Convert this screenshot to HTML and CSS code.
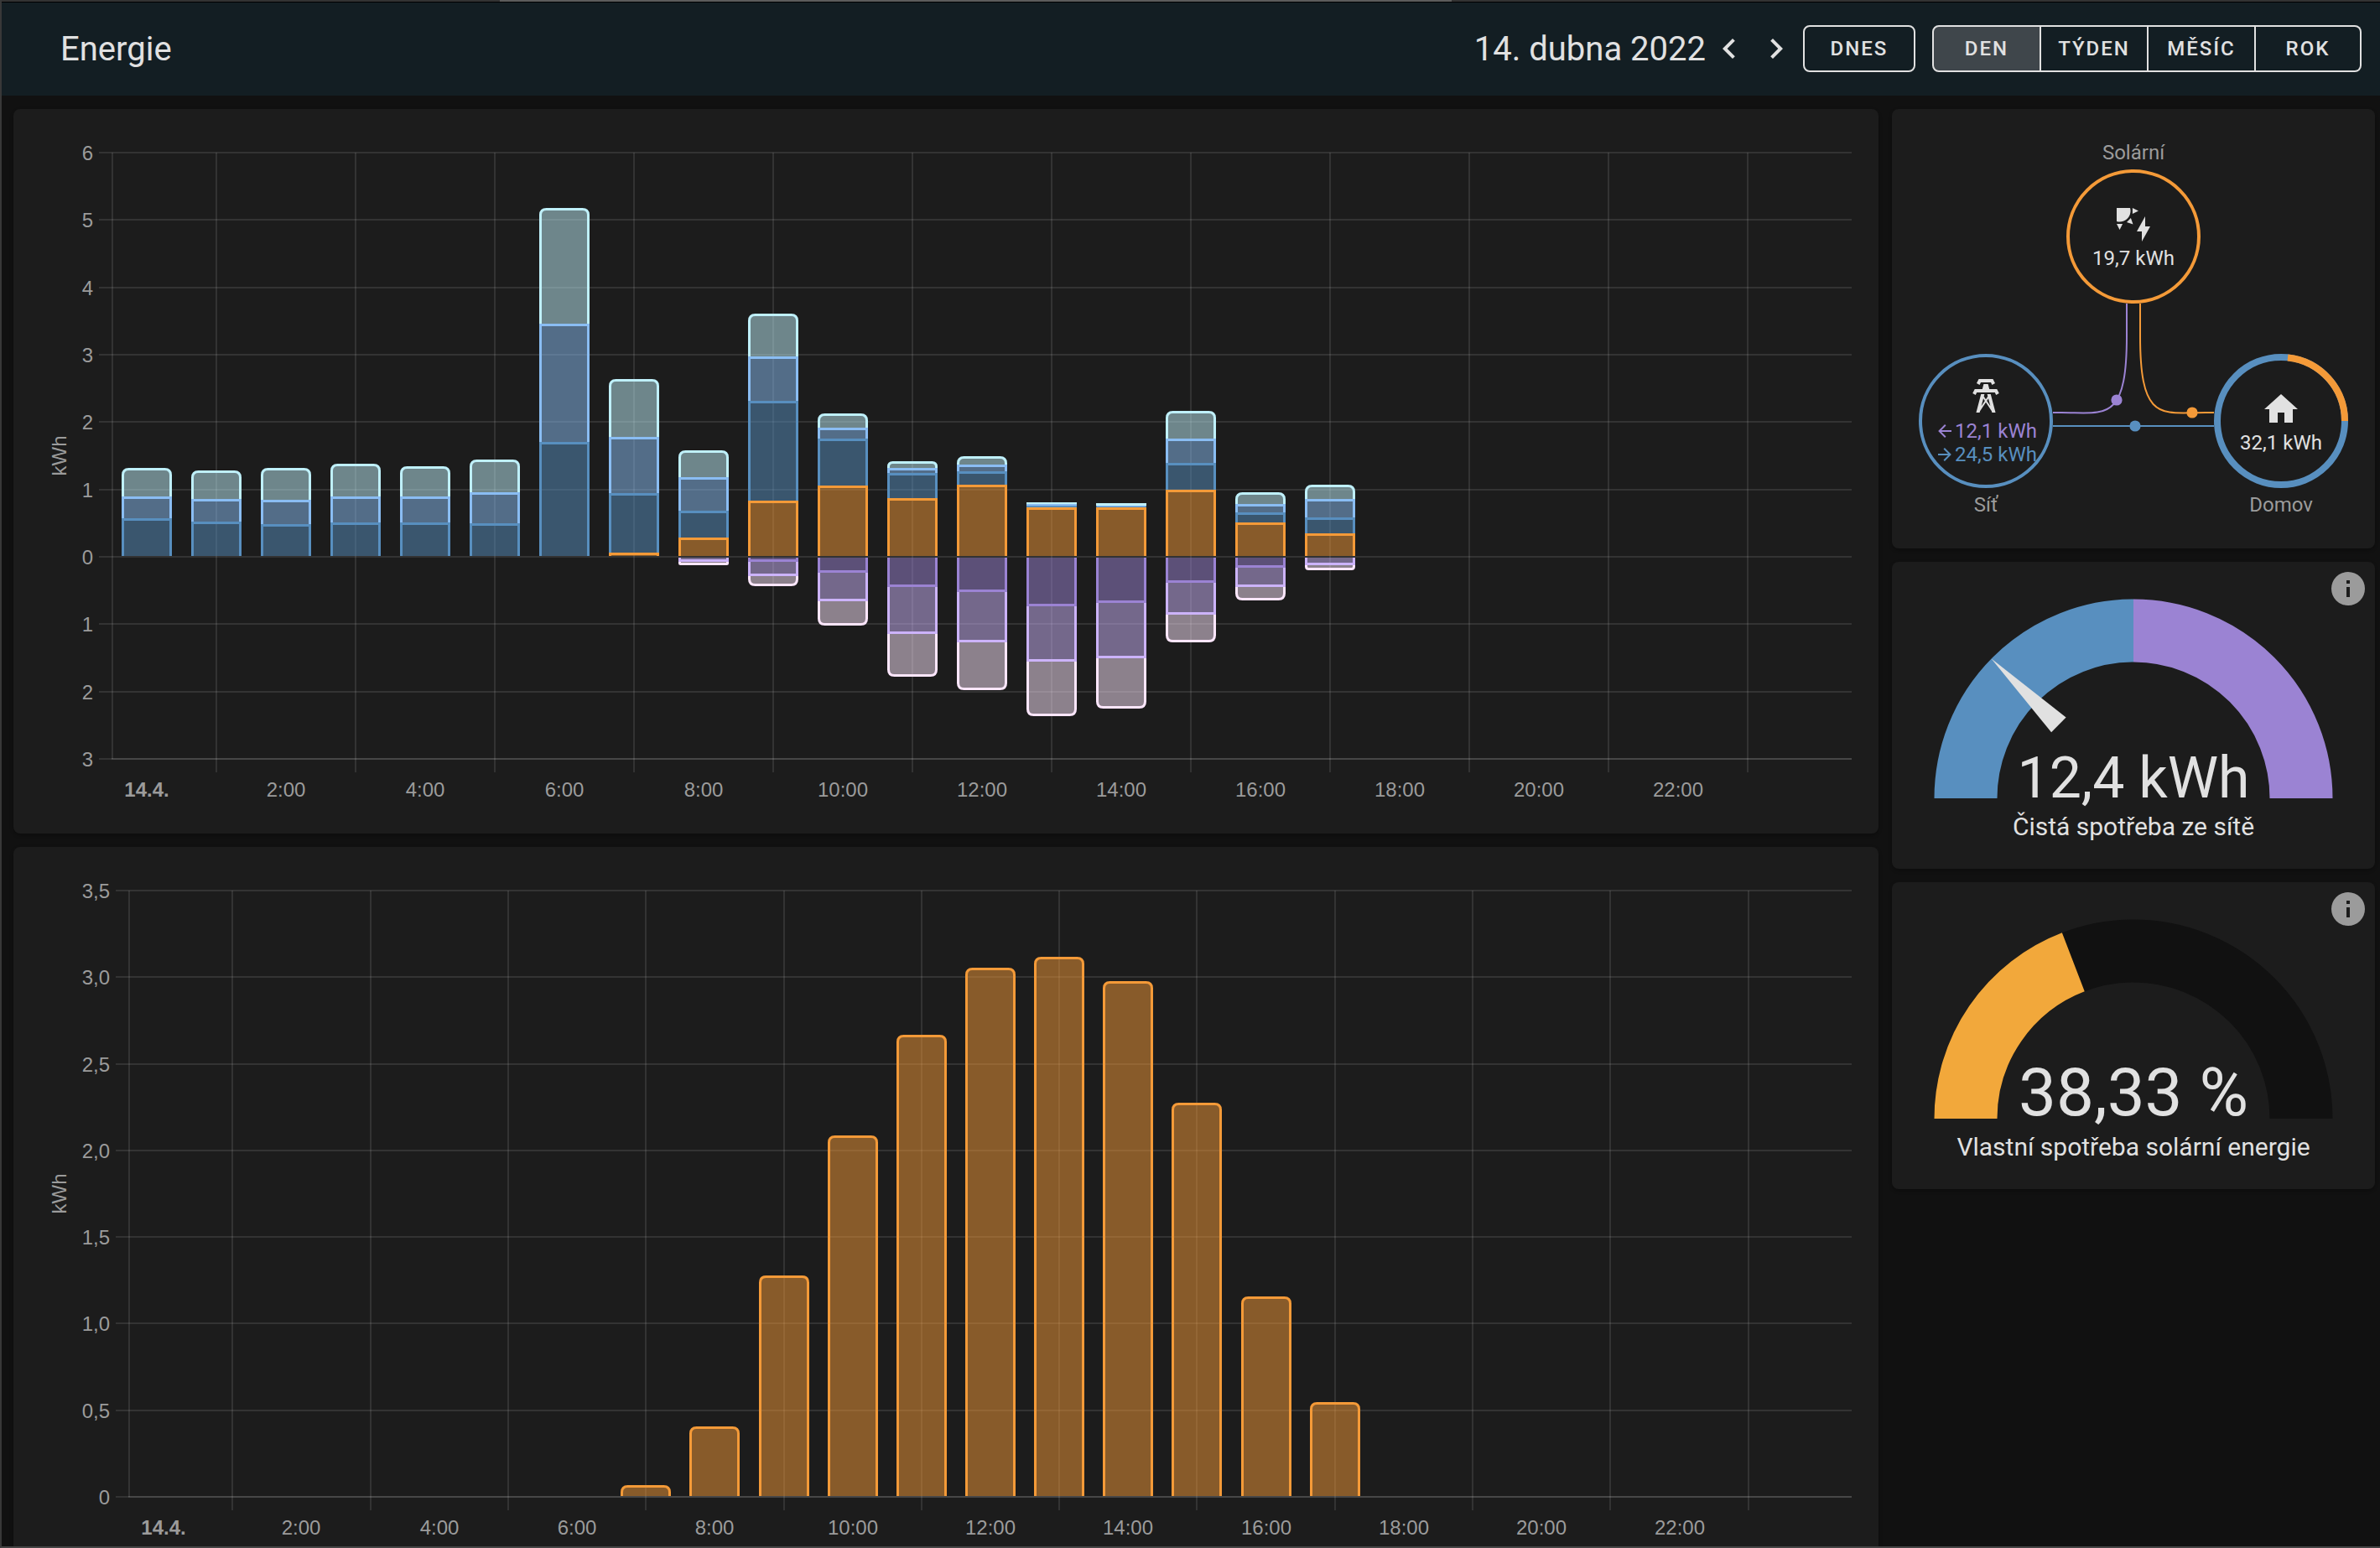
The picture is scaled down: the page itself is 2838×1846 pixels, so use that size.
FILE: index.html
```html
<!DOCTYPE html>
<html lang="cs">
<head>
<meta charset="utf-8">
<title>Energie</title>
<link rel="stylesheet" href="styles.css">
</head>
<body>
  <div class="window">
    <header class="toolbar">
      <h1>Energie</h1>
      <div class="period">
        <span class="date">14. dubna 2022</span>
        <button class="icon-btn" aria-label="Předchozí">
          <svg viewBox="0 0 24 24"><path d="M15.41,16.58L10.83,12L15.41,7.41L14,6L8,12L14,18L15.41,16.58Z"/></svg>
        </button>
        <button class="icon-btn" aria-label="Další">
          <svg viewBox="0 0 24 24"><path d="M8.59,16.58L13.17,12L8.59,7.41L10,6L16,12L10,18L8.59,16.58Z"/></svg>
        </button>
        <button class="today-btn">Dnes</button>
        <div class="toggle-group">
          <button class="active" aria-pressed="true">Den</button>
          <button>Týden</button>
          <button>Měsíc</button>
          <button>Rok</button>
        </div>
      </div>
    </header>

    <main class="dashboard">
      <div class="column">
        <section class="card chart-card"><svg class="chart" id="usage-chart"></svg></section>
        <section class="card chart-card"><svg class="chart" id="solar-chart"></svg></section>
      </div>

      <div class="column">
        <section class="card flow-card">
          <div class="flow-row center">
            <div class="node">
              <span class="node-label">Solární</span>
              <div class="circle solar">
                <svg class="node-icon" viewBox="0 0 24 24"><path d="M11.45,2V5.55L15,3.77L11.45,2M10.45,8L8,10.46L11.75,11.71L10.45,8M2,11.45L3.77,15L5.55,11.45H2M10,2H2V10C2.57,10.17 3.17,10.25 3.77,10.25C7.35,10.26 10.26,7.35 10.27,3.75C10.26,3.16 10.17,2.57 10,2M17,22V16H14L19,7V13H22L17,22Z"/></svg>
                <span class="value">19,7 kWh</span>
              </div>
            </div>
          </div>
          <div class="flow-row">
            <div class="node">
              <div class="circle grid">
                <svg class="node-icon" viewBox="0 0 24 24"><path d="M8.28,5.45L6.5,4.55L7.76,2H16.23L17.5,4.55L15.72,5.44L15,4H9L8.28,5.45M18.62,8H14.09L13.3,5H10.7L9.91,8H5.38L4.1,10.55L5.89,11.44L6.62,10H17.38L18.1,11.45L19.89,10.56L18.62,8M17.77,22H15.7L15.46,21.1L12,15.9L8.53,21.1L8.3,22H6.23L9.12,11H11.19L10.83,12.35L12,14.1L13.16,12.35L12.81,11H14.88L17.77,22M11.4,15L10.5,13.65L9.32,18.13L11.4,15M14.68,18.12L13.5,13.64L12.6,15L14.68,18.12Z"/></svg>
                <span class="flow-value return"><svg viewBox="0 0 24 24"><path d="M20,11V13H8L13.5,18.5L12.08,19.92L4.16,12L12.08,4.08L13.5,5.5L8,11H20Z"/></svg>12,1 kWh</span>
                <span class="flow-value consumption"><svg viewBox="0 0 24 24"><path d="M4,11V13H16L10.5,18.5L11.92,19.92L19.84,12L11.92,4.08L10.5,5.5L16,11H4Z"/></svg>24,5 kWh</span>
              </div>
              <span class="node-label">Síť</span>
            </div>
            <div class="node">
              <div class="circle home">
                <svg class="ring" viewBox="0 0 160 160">
                  <circle class="ring-grid" cx="80" cy="80" r="76"/>
                  <path class="ring-solar" d="M88,4.4A76,76 0 0 1 156,80"/>
                </svg>
                <svg class="node-icon" viewBox="0 0 24 24"><path d="M10,20V14H14V20H19V12H22L12,3L2,12H5V20H10Z"/></svg>
                <span class="value">32,1 kWh</span>
              </div>
              <span class="node-label">Domov</span>
            </div>
          </div>
          <svg class="flow-lines" viewBox="0 0 576 524">
            <path class="line-return" d="M280,232v39c0,104 -26,91 -78,91h-10"/>
            <path class="line-solar" d="M296,232v39c0,104 26,91 78,91h10"/>
            <path class="line-grid" d="M192,378h192"/>
            <circle class="dot-return" cx="268" cy="347" r="6.6"/>
            <circle class="dot-solar" cx="358" cy="362" r="6.6"/>
            <circle class="dot-grid" cx="290" cy="378" r="6.6"/>
          </svg>
        </section>

        <section class="card gauge-card">
          <button class="info-btn" aria-label="Informace">
            <svg viewBox="0 0 24 24"><path d="M13,9H11V7H13M13,17H11V11H13M12,2A10,10 0 0,0 2,12A10,10 0 0,0 12,22A10,10 0 0,0 22,12A10,10 0 0,0 12,2Z"/></svg>
          </button>
          <svg class="gauge" viewBox="-250 -250 500 250">
            <path class="arc arc-grid" d="M-200,0A200,200 0 0 1 0,-200"/>
            <path class="arc arc-return" d="M0,-200A200,200 0 0 1 200,0"/>
            <path class="needle" transform="rotate(44.5)" d="M-125,-12.5L-237.5,0L-125,12.5Z"/>
            <text class="gauge-value" y="-1">12,4 kWh</text>
          </svg>
          <div class="gauge-name">Čistá spotřeba ze sítě</div>
        </section>

        <section class="card gauge-card">
          <button class="info-btn" aria-label="Informace">
            <svg viewBox="0 0 24 24"><path d="M13,9H11V7H13M13,17H11V11H13M12,2A10,10 0 0,0 2,12A10,10 0 0,0 12,22A10,10 0 0,0 22,12A10,10 0 0,0 12,2Z"/></svg>
          </button>
          <svg class="gauge" viewBox="-250 -250 500 250">
            <path class="arc arc-empty" d="M-200,0A200,200 0 0 1 200,0"/>
            <path class="arc arc-solar" d="M-200,0A200,200 0 0 1 -71.7,-186.7"/>
            <text class="gauge-value large" y="-4">38,33 %</text>
          </svg>
          <div class="gauge-name">Vlastní spotřeba solární energie</div>
        </section>
      </div>
    </main>
  </div>
  <script src="charts.js"></script>
</body>
</html>
```

FILE: styles.css
```css
* {
  box-sizing: border-box;
}

body {
  margin: 0;
  background-color: #111111;
  color: #e1e1e1;
  font-family: Roboto, sans-serif;
}

.window {
  display: flex;
  flex-direction: column;
  height: 100vh;
  overflow: hidden;
  border-left: 2px solid #383838;
  border-bottom: 2px solid #444444;
}

.window::before {
  content: "";
  flex: none;
  height: 2px;
  margin-left: -2px;
  border-bottom: 1px solid #000;
  background: linear-gradient(to right, #333 21%, #5c5c5c 21%, #5c5c5c 61%, #333 61%);
}

/* toolbar */
.toolbar {
  flex: none;
  display: flex;
  justify-content: space-between;
  padding: 27px 22px 26px 70px;
  background-color: #131e23;
  font-size: 40px;
  line-height: 58px;
}

.toolbar h1 {
  margin: 0;
  font-size: 40px;
  font-weight: 400;
}

.period {
  display: flex;
  align-items: flex-start;
}

button {
  padding: 0;
  border: none;
  background: none;
  color: inherit;
  font-family: inherit;
  cursor: pointer;
}

svg {
  display: block;
  fill: currentColor;
}

.icon-btn {
  width: 56px;
  height: 56px;
  padding: 4px;
}

.today-btn,
.toggle-group button {
  height: 56px;
  font-size: 24px;
  font-weight: 500;
  letter-spacing: 2px;
  text-transform: uppercase;
}

.today-btn {
  width: 134px;
  margin: 0 20px 0 4px;
  border: 2px solid #e1e1e1;
  border-radius: 8px;
}

.toggle-group {
  display: flex;
}

.toggle-group button {
  width: 128px;
  border: 2px solid #e1e1e1;
  border-left-width: 0;
}

.toggle-group button:first-child {
  width: 130px;
  border-left-width: 2px;
  border-radius: 8px 0 0 8px;
}

.toggle-group button:last-child {
  width: 126px;
  border-radius: 0 8px 8px 0;
}

.toggle-group .active {
  background-color: #3f464b;
}

/* layout */
.dashboard {
  display: grid;
  grid-template-columns: 1fr 576px;
  align-items: start;
  gap: 16px;
  padding: 16px 6px 0 14px;
}

.column {
  display: grid;
  gap: 16px;
}

.card {
  position: relative;
  border-radius: 8px;
  background-color: #1c1c1c;
  box-shadow: 0 2px 4px rgba(0, 0, 0, 0.3);
}

/* charts */
.chart-card {
  padding: 32px;
}

.chart {
  width: 100%;
  height: 800px;
}

.chart text {
  fill: #9b9b9b;
  font-family: "Liberation Sans", Arial, sans-serif;
  font-size: 24px;
}

.chart .middle {
  text-anchor: middle;
}

.chart .end {
  text-anchor: end;
}

.chart .major {
  font-weight: 700;
}

.grid-line {
  fill: #e1e1e1;
  fill-opacity: 0.12;
}

/* energy distribution */
.flow-card {
  padding: 40px 32px;
}

.flow-row {
  display: flex;
  justify-content: space-between;
}

.flow-row.center {
  justify-content: center;
  margin-bottom: 60px;
}

.node {
  display: flex;
  flex-direction: column;
  align-items: center;
  gap: 8px;
  width: 160px;
  font-size: 24px;
  line-height: 24px;
}

.node-label {
  color: #9b9b9b;
}

.circle {
  position: relative;
  display: flex;
  flex-direction: column;
  align-items: center;
  justify-content: center;
  width: 160px;
  height: 160px;
  border-radius: 50%;
  white-space: nowrap;
}

.circle.solar {
  border: 4px solid #f49a38;
}

.circle.grid {
  border: 4px solid #588fbf;
}

.node-icon {
  width: 48px;
  height: 48px;
  margin-bottom: 4px;
}

.flow-value {
  display: flex;
  align-items: center;
  line-height: 28px;
}

.flow-value svg {
  width: 24px;
  height: 24px;
}

.return {
  color: #9b83d3;
}

.consumption {
  color: #588fbf;
}

.ring,
.flow-lines {
  position: absolute;
  top: 0;
  left: 0;
  width: 100%;
  height: 100%;
  fill: none;
}

.ring circle,
.ring path {
  stroke-width: 8px;
}

.flow-lines path {
  stroke-width: 2px;
}

.ring-grid,
.line-grid {
  stroke: #588fbf;
}

.ring-solar,
.line-solar {
  stroke: #f49a38;
}

.line-return {
  stroke: #9b83d3;
}

.dot-return {
  fill: #9b83d3;
}

.dot-solar {
  fill: #f49a38;
}

.dot-grid {
  fill: #588fbf;
}

/* gauges */
.gauge-card {
  padding: 32px;
  text-align: center;
}

.info-btn {
  position: absolute;
  top: 8px;
  right: 8px;
  width: 48px;
  height: 48px;
  color: #9b9b9b;
}

.gauge {
  width: 500px;
  max-width: 100%;
  margin: 0 auto 16px;
  overflow: visible;
}

.arc {
  fill: none;
  stroke-width: 75px;
}

.arc-grid {
  stroke: #588fbf;
}

.arc-return {
  stroke: #9b83d3;
}

.arc-empty {
  stroke: #111111;
}

.arc-solar {
  stroke: #f2a83b;
}

.gauge-value {
  font-size: 68px;
  text-anchor: middle;
}

.gauge-value.large {
  font-size: 80px;
}

.gauge-name {
  font-size: 30px;
  line-height: 36px;
}
```

FILE: charts.js
```js
const SVG_NS = "http://www.w3.org/2000/svg";
const SLOTS = 25;
const PLOT_TOP = 20;
const PLOT_BOTTOM = 743;
const BAR_WIDTH = 60;
const BORDER = 3;

const ORANGE = "#f49a38";
const BLUES = ["#588fbf", "#8abdf3", "#bff0fa"];
const PURPLES = ["#9b83d3", "#ccb3fa", "#fce6fc"];

// cumulative tops per hour: solar, then three grid tariffs
const usage = [
  [0, 0.575, 0.9, 1.32],
  [0, 0.525, 0.86, 1.28],
  [0, 0.48, 0.85, 1.315],
  [0, 0.515, 0.9, 1.38],
  [0, 0.515, 0.9, 1.35],
  [0, 0.5, 0.96, 1.44],
  [0, 1.7, 3.465, 5.18],
  [0.06, 0.945, 1.78, 2.64],
  [0.285, 0.69, 1.18, 1.575],
  [0.84, 2.32, 2.97, 3.61],
  [1.055, 1.755, 1.915, 2.125],
  [0.87, 1.245, 1.32, 1.425],
  [1.065, 1.275, 1.375, 1.495],
  [0.735, 0.76, 0.79, 0.815],
  [0.73, 0.745, 0.765, 0.795],
  [0.995, 1.39, 1.75, 2.16],
  [0.505, 0.655, 0.785, 0.96],
  [0.345, 0.585, 0.855, 1.075]
];

// cumulative energy returned to the grid
const returned = {
  8: [0, 0.075, 0.12],
  9: [0.075, 0.285, 0.435],
  10: [0.235, 0.655, 1.025],
  11: [0.45, 1.145, 1.785],
  12: [0.52, 1.265, 1.985],
  13: [0.74, 1.56, 2.37],
  14: [0.68, 1.5, 2.25],
  15: [0.38, 0.86, 1.275],
  16: [0.16, 0.45, 0.65],
  17: [0, 0.13, 0.195]
};

const solar = {
  7: 0.067, 8: 0.408, 9: 1.277, 10: 2.087, 11: 2.666, 12: 3.057,
  13: 3.117, 14: 2.976, 15: 2.276, 16: 1.157, 17: 0.546
};

function add(svg, name, attrs, text) {
  const el = document.createElementNS(SVG_NS, name);
  for (const key in attrs) {
    el.setAttribute(key, attrs[key]);
  }
  if (text) {
    el.textContent = text;
  }
  svg.appendChild(el);
}

// base is the side nearest to zero, it has no border
function drawBar(svg, center, base, end, color, rounded) {
  const dir = end < base ? -1 : 1;
  const height = Math.abs(end - base);
  const border = Math.min(BORDER, height);
  const left = center - BAR_WIDTH / 2 + border / 2;
  const right = center + BAR_WIDTH / 2 - border / 2;
  const edge = end - dir * border / 2;
  const r = rounded ? Math.min(7, Math.max(height - border, 0)) : 0;
  const outline = `M${left},${base}V${edge - dir * r}Q${left},${edge} ${left + r},${edge}` +
    `H${right - r}Q${right},${edge} ${right},${edge - dir * r}V${base}`;
  add(svg, "path", { d: outline, fill: color, "fill-opacity": 0.5, stroke: color, "stroke-width": border });
}

function drawChart(id, options) {
  const svg = document.getElementById(id);
  svg.innerHTML = "";
  const left = options.left;
  const right = svg.clientWidth;
  const slot = (right - left) / SLOTS;
  const range = options.max - options.min;
  const y = v => Math.round(PLOT_BOTTOM - (v - options.min) / range * (PLOT_BOTTOM - PLOT_TOP));
  const x = hour => Math.round(left + slot * (hour + 0.5));

  for (let v = options.min; v <= options.max; v += options.step) {
    add(svg, "rect", { class: "grid-line", x: left - 16, y: y(v) - 1, width: right - left + 16, height: 2 });
    add(svg, "text", { class: "end", x: left - 23, y: y(v) + 9 }, options.format(v));
  }
  add(svg, "rect", { class: "grid-line", x: left - 1, y: PLOT_TOP, width: 2, height: PLOT_BOTTOM - PLOT_TOP });
  for (let hour = 1; hour < 24; hour += 2) {
    add(svg, "rect", { class: "grid-line", x: x(hour) - 1, y: PLOT_TOP, width: 2, height: PLOT_BOTTOM - PLOT_TOP + 16 });
  }
  add(svg, "rect", { class: "grid-line", x: left - 1, y: PLOT_BOTTOM - 1, width: right - left + 1, height: 2 });

  for (let hour = 0; hour < 24; hour += 2) {
    add(svg, "text", { class: hour ? "middle" : "middle major", x: x(hour), y: PLOT_BOTTOM + 45 }, hour ? hour + ":00" : "14.4.");
  }
  const mid = (PLOT_TOP + PLOT_BOTTOM) / 2;
  add(svg, "text", { class: "middle", transform: `translate(31 ${mid}) rotate(-90)` }, "kWh");

  options.bars(svg, x, y);
}

function drawStack(svg, center, values, colors, y, sign) {
  let previous = 0;
  values.forEach((value, i) => {
    if (value === previous) {
      return;
    }
    const base = y(previous * sign) - (previous ? 0 : sign);
    drawBar(svg, center, base, y(value * sign), colors[i], i === values.length - 1);
    previous = value;
  });
}

function drawAll() {
  drawChart("usage-chart", {
    left: 86, min: -3, max: 6, step: 1,
    format: v => String(Math.abs(v)),
    bars(svg, x, y) {
      usage.forEach((values, hour) => drawStack(svg, x(hour), values, [ORANGE, ...BLUES], y, 1));
      for (const hour in returned) {
        drawStack(svg, x(Number(hour)), returned[hour], PURPLES, y, -1);
      }
    }
  });
  drawChart("solar-chart", {
    left: 106, min: 0, max: 3.5, step: 0.5,
    format: v => v ? v.toFixed(1).replace(".", ",") : "0",
    bars(svg, x, y) {
      for (const hour in solar) {
        drawStack(svg, x(Number(hour)), [solar[hour]], [ORANGE], y, 1);
      }
    }
  });
}

drawAll();
window.addEventListener("resize", drawAll);
```
